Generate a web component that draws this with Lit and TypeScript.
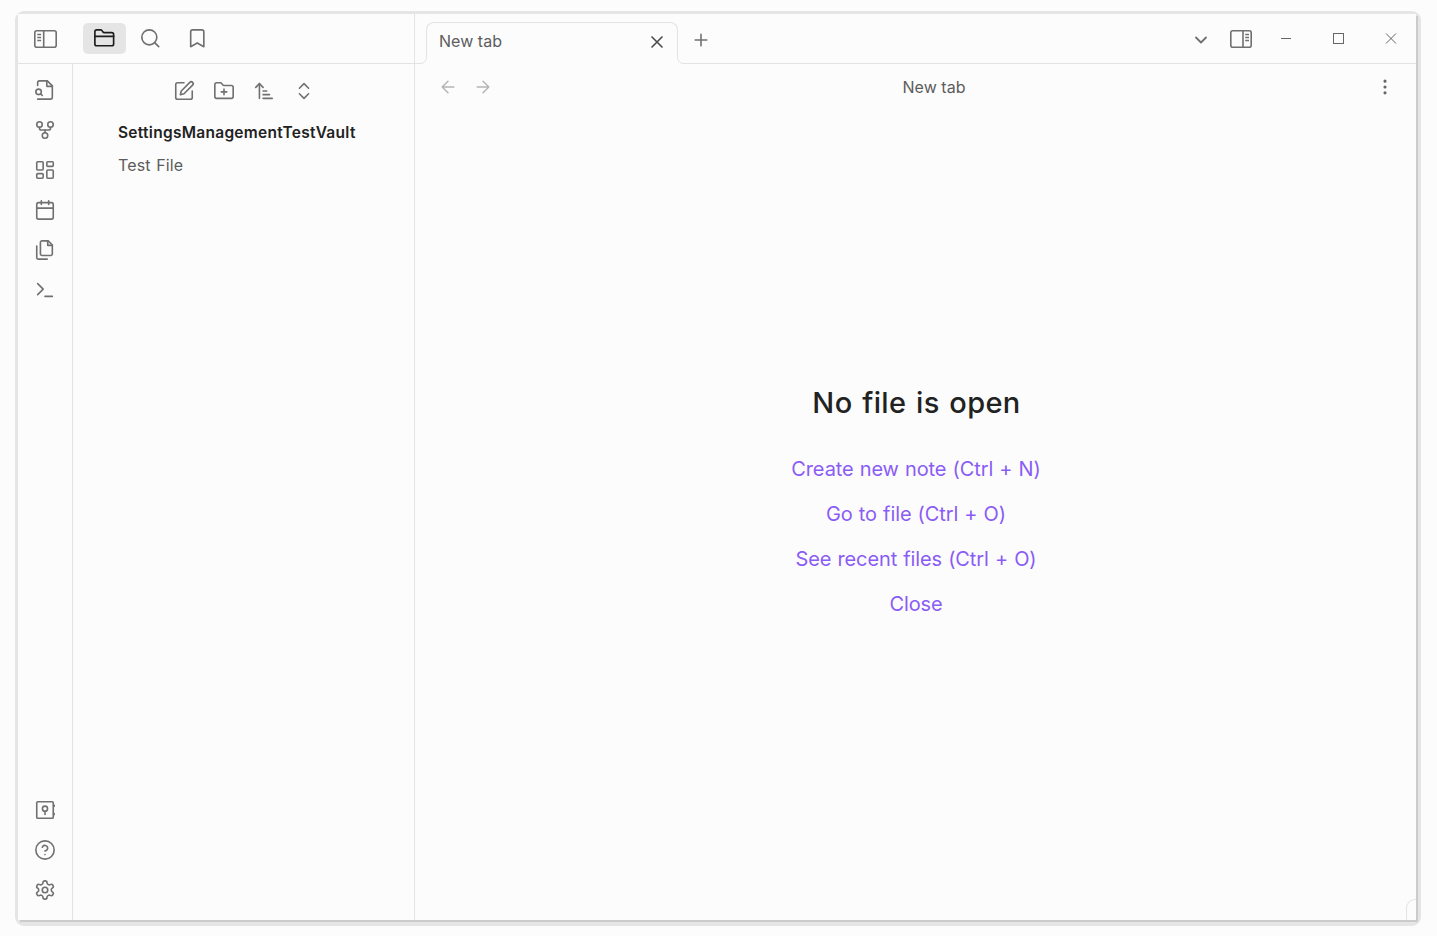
import { LitElement, html, css, svg } from "lit";
import { customElement, property } from "lit/decorators.js";

const p = (d: string) => svg`<path d=${d}></path>`;

const ICONS: Record<string, unknown> = {
  folder: svg`${p("M20 20a2 2 0 0 0 2-2V8a2 2 0 0 0-2-2h-7.9a2 2 0 0 1-1.69-.9L9.6 3.9A2 2 0 0 0 7.93 3H4a2 2 0 0 0-2 2v13a2 2 0 0 0 2 2Z")}${p("M2 10h20")}`,
  search: svg`<circle cx="11" cy="11" r="8"></circle>${p("m21 21-4.3-4.3")}`,
  bookmark: p("m19 21-7-4-7 4V5a2 2 0 0 1 2-2h10a2 2 0 0 1 2 2v16z"),
  fileSearch: svg`${p("M4 22h14a2 2 0 0 0 2-2V7.5L14.5 2H6a2 2 0 0 0-2 2v3")}${p("M14 2v6h6")}${p("M5 17a3 3 0 1 0 0-6 3 3 0 0 0 0 6z")}${p("m9 18-1.5-1.5")}`,
  fork: svg`<circle cx="12" cy="18" r="3"></circle><circle cx="6" cy="6" r="3"></circle><circle cx="18" cy="6" r="3"></circle>${p("M18 9v1a2 2 0 0 1-2 2H8a2 2 0 0 1-2-2V9")}${p("M12 12v3")}`,
  dashboard: svg`<rect x="3" y="3" width="7" height="9" rx="1"></rect><rect x="14" y="3" width="7" height="5" rx="1"></rect><rect x="14" y="12" width="7" height="9" rx="1"></rect><rect x="3" y="16" width="7" height="5" rx="1"></rect>`,
  calendar: svg`<rect x="3" y="4" width="18" height="18" rx="2"></rect>${p("M16 2v4M8 2v4M3 10h18")}`,
  files: svg`${p("M15.5 2H8.6c-.4 0-.8.2-1.1.5-.3.3-.5.7-.5 1.1v12.8c0 .4.2.8.5 1.1.3.3.7.5 1.1.5h9.8c.4 0 .8-.2 1.1-.5.3-.3.5-.7.5-1.1V6.5L15.5 2z")}${p("M3 7.6v12.8c0 .4.2.8.5 1.1.3.3.7.5 1.1.5h9.8")}${p("M15 2v5h5")}`,
  terminal: svg`${p("m4 17 6-6-6-6")}${p("M12 19h8")}`,
  vault: svg`<rect x="3" y="3" width="18" height="18" rx="1.2"></rect><circle cx="12" cy="10.6" r="2.8"></circle>${p("M12 13.6v3.2M22 6.8v1M22 16v1")}`,
  help: svg`<circle cx="12" cy="12" r="10"></circle>${p("M9.09 9a3 3 0 0 1 5.83 1c0 2-3 3-3 3")}${p("M12 17h.01")}`,
  settings: svg`${p("M12.22 2h-.44a2 2 0 0 0-2 2v.18a2 2 0 0 1-1 1.73l-.43.25a2 2 0 0 1-2 0l-.15-.08a2 2 0 0 0-2.73.73l-.22.38a2 2 0 0 0 .73 2.73l.15.1a2 2 0 0 1 1 1.72v.51a2 2 0 0 1-1 1.74l-.15.09a2 2 0 0 0-.73 2.73l.22.38a2 2 0 0 0 2.73.73l.15-.08a2 2 0 0 1 2 0l.43.25a2 2 0 0 1 1 1.73V20a2 2 0 0 0 2 2h.44a2 2 0 0 0 2-2v-.18a2 2 0 0 1 1-1.73l.43-.25a2 2 0 0 1 2 0l.15.08a2 2 0 0 0 2.73-.73l.22-.39a2 2 0 0 0-.73-2.73l-.15-.08a2 2 0 0 1-1-1.74v-.5a2 2 0 0 1 1-1.74l.15-.09a2 2 0 0 0 .73-2.73l-.22-.38a2 2 0 0 0-2.73-.73l-.15.08a2 2 0 0 1-2 0l-.43-.25a2 2 0 0 1-1-1.73V4a2 2 0 0 0-2-2z")}<circle cx="12" cy="12" r="3"></circle>`,
  edit: svg`${p("M12 3H5a2 2 0 0 0-2 2v14a2 2 0 0 0 2 2h14a2 2 0 0 0 2-2v-7")}${p("M18.375 2.625a2.12 2.12 0 0 1 3 3L12 15l-4 1 1-4Z")}`,
  folderPlus: svg`${p("M20 20a2 2 0 0 0 2-2V8a2 2 0 0 0-2-2h-7.9a2 2 0 0 1-1.69-.9L9.6 3.9A2 2 0 0 0 7.93 3H4a2 2 0 0 0-2 2v13a2 2 0 0 0 2 2Z")}${p("M12 10v6M9 13h6")}`,
  sort: svg`${p("m3 8 4-4 4 4")}${p("M7 4v16M11 12h4M11 16h7M11 20h10")}`,
  upDown: svg`${p("m7 15 5 5 5-5")}${p("m7 9 5-5 5 5")}`,
  close: p("M18 6 6 18M6 6l12 12"),
  plus: p("M5 12h14M12 5v14"),
  left: p("m12 19-7-7 7-7M19 12H5"),
  right: p("M5 12h14M12 5l7 7-7 7"),
  down: p("m6 9 6 6 6-6"),
  more: svg`<circle cx="12" cy="12" r="1"></circle><circle cx="12" cy="5" r="1"></circle><circle cx="12" cy="19" r="1"></circle>`,
};

@customElement("ui-icon")
export class UiIcon extends LitElement {
  @property() name = "";
  static styles = css`
    :host { display: block; flex: none; width: 22.5px; height: 22.5px; }
    .glyph {
      display: block; width: 100%; height: 100%; overflow: visible; fill: none;
      stroke: currentColor; stroke-width: var(--stroke, 1.75);
      stroke-linecap: round; stroke-linejoin: round;
    }
  `;
  render() {
    return html`<svg class="glyph" viewBox="0 0 24 24">${ICONS[this.name]}</svg>`;
  }
}

@customElement("app-root")
export class AppRoot extends LitElement {
  static styles = css`
    :host {
      display: block; box-sizing: border-box; width: 100%; height: 936px;
      padding: 11px 16px 10px 15px; background: #fcfcfc; color: #5c5c5c;
      font: 16px/24px Inter, "Noto Sans", sans-serif;
    }
    * { box-sizing: border-box; }
    .frame {
      height: 915px; padding: 3px 5px 6px 3px; border-radius: 9px; background: #e5e5e5;
    }
    .window {
      height: 906px; display: grid; grid-template-columns: 397px 1fr;
      background: #fcfcfc; box-shadow: 2px 2px 0 #cbcbcb; position: relative;
    }
    .side {
      border-right: 1px solid #e3e3e3; display: grid;
      grid-template-rows: 50px 1fr; min-height: 0;
    }
    .side-head {
      border-bottom: 1px solid #e3e3e3; display: flex; align-items: center;
      padding-left: 16px; color: #707070;
    }
    .panel { display: block; flex: none; fill: none; stroke: currentColor; }
    .modes { display: flex; gap: 3px; margin-left: 26px; }
    .mode {
      width: 43px; height: 31px; display: grid; place-items: center; border-radius: 5px;
    }
    .mode:last-child { margin-left: 1px; }
    .mode.active { background: #e5e5e5; color: #1c1c1c; }
    .side-body { display: grid; grid-template-columns: 55px 1fr; min-height: 0; }
    .rail {
      border-right: 1px solid #e3e3e3; display: flex; flex-direction: column;
      justify-content: space-between; padding: 6px 0 10px; color: #707070;
    }
    .rail-cell { height: 40px; display: grid; place-items: center; }
    .small { width: 22px; height: 22px; }
    .explorer { padding-top: 6px; }
    .tools { display: flex; justify-content: center; height: 41px; padding-left: 1px; color: #707070; }
    .tool { width: 40px; display: grid; place-items: center; }
    .tree { padding: 6px 0 0 45px; }
    .vault { font-weight: 600; color: #222; height: 33px; line-height: 31px; }
    .file { height: 33px; line-height: 31px; letter-spacing: 0.12px; word-spacing: 1px; }
    .vault-name { font-size: 15.5px; letter-spacing: 0.28px; }
    .main { display: grid; grid-template-rows: 50px 46px 1fr; min-width: 0; }
    .tabs {
      border-bottom: 1px solid #e3e3e3; display: flex; align-items: flex-start;
      padding: 8px 14px 0 11px; color: #707070;
    }
    .tab {
      position: relative; width: 252px; height: 42px; flex: none; display: flex;
      align-items: center; justify-content: space-between; padding: 0 10px 4px 12px;
      background: #fcfcfc; border: 1px solid #e3e3e3; border-bottom: 0;
      border-radius: 8px 8px 0 0; color: #5c5c5c;
    }
    .tab-name { margin-top: -1px; }
    .flare {
      position: absolute; bottom: 0; width: 8px; height: 8px; overflow: visible;
      fill: none; stroke: #e3e3e3;
    }
    .flare.before { left: -8px; }
    .flare.after { right: -8px; }
    .patch { fill: #fcfcfc; stroke: none; }
    .medium { width: 20px; height: 20px; }
    .close { color: #4c4c4c; --stroke: 2; }
    .add { margin: 8px 0 0 13px; --stroke: 1.9; }
    .controls { flex: 1; display: flex; justify-content: flex-end; align-items: center; height: 34px; }
    .chev { --stroke: 2.2; margin: 1px 19px 0 0; }
    .win { display: block; fill: none; stroke: #666; flex: none; margin-top: -2px; }
    .view-head {
      display: grid; grid-template-columns: 1fr auto 1fr; align-items: center;
      padding: 0 21px 0 23px;
    }
    .nav { display: flex; gap: 15px; color: #b5b5b5; }
    .more { justify-self: end; color: #666; }
    .title { margin-left: 35px; }
    .title, .tab-name { letter-spacing: 0.04px; }
    .empty { display: flex; flex-direction: column; align-items: center; padding-top: 268px; }
    .heading {
      margin: 0 0 28px; padding-left: 2px; font-size: 29px; line-height: 50px;
      font-weight: 500; color: #222; letter-spacing: 0.35px; word-spacing: 1.6px;
    }
    .action {
      font-size: 20px; line-height: 25px; height: 45px; padding: 1px 0 0 1px;
      color: #8a5cf5; letter-spacing: -0.1px; word-spacing: 0.6px;
    }
    .status {
      position: absolute; right: 0; bottom: 0; width: 10px; height: 21px;
      border: solid #e3e3e3; border-width: 1px 0 0 1px; border-radius: 9px 0 0 0;
    }
  `;

  private cell(name: string) {
    return html`<div class="rail-cell"><ui-icon class="small" name=${name}></ui-icon></div>`;
  }

  render() {
    return html`
      <div class="frame"><div class="window">
        <div class="side">
          <div class="side-head">
            <svg class="panel" width="23" height="18" stroke-width="1.6" viewBox="0 0 23 18">
              <rect x=".8" y=".8" width="21.4" height="16.4" rx="2"></rect>
              <path d="M9.7 1v16M3.3 4.5h3.8M3.3 7.5h3.8M3.3 10.5h3.8"></path>
            </svg>
            <div class="modes">
              <div class="mode active"><ui-icon name="folder"></ui-icon></div>
              <div class="mode"><ui-icon name="search"></ui-icon></div>
              <div class="mode"><ui-icon name="bookmark"></ui-icon></div>
            </div>
          </div>
          <div class="side-body">
            <div class="rail">
              <div>${["fileSearch", "fork", "dashboard", "calendar", "files", "terminal"].map((n) => this.cell(n))}</div>
              <div>${["vault", "help", "settings"].map((n) => this.cell(n))}</div>
            </div>
            <div class="explorer">
              <div class="tools">
                ${["edit", "folderPlus", "sort", "upDown"].map((n) => html`<div class="tool"><ui-icon class="small" name=${n}></ui-icon></div>`)}
              </div>
              <div class="tree">
                <div class="vault"><span class="vault-name">SettingsManagementTestVault</span></div>
                <div class="file">Test File</div>
              </div>
            </div>
          </div>
        </div>
        <div class="main">
          <div class="tabs">
            <div class="tab">
              <svg class="flare before" viewBox="0 0 8 8">
                <path class="patch" d="M1 8V7.5C5 7.5 7 5 7 0H9V8Z"></path>
                <path d="M0 7.5H1C5 7.5 7.5 5 7.5 0"></path>
              </svg>
              <span class="tab-name">New tab</span>
              <ui-icon class="close medium" name="close"></ui-icon>
              <svg class="flare after" viewBox="0 0 8 8">
                <path class="patch" d="M7 8V7.5C3 7.5 1 5 1 0H-1V8Z"></path>
                <path d="M8 7.5H7C3 7.5 .5 5 .5 0"></path>
              </svg>
            </div>
            <ui-icon class="add medium" name="plus"></ui-icon>
            <div class="controls">
              <ui-icon class="chev medium" name="down"></ui-icon>
              <svg class="panel" width="22" height="18" stroke-width="1.6" viewBox="0 0 22 18">
                <rect x=".8" y=".8" width="20.4" height="16.4" rx="2"></rect>
                <path d="M13 1v16M15.2 4.5h3.8M15.2 7.5h3.8M15.2 10.5h3.8"></path>
              </svg>
              <svg class="win" width="150" height="12" viewBox="0 0 150 12">
                <path d="M29 6.5h10"></path>
                <rect x="81.5" y="1.5" width="10" height="10"></rect>
                <path d="m134 1.5 10 10M144 1.5l-10 10"></path>
              </svg>
            </div>
          </div>
          <div class="view-head">
            <div class="nav">
              <ui-icon class="medium" name="left"></ui-icon>
              <ui-icon class="medium" name="right"></ui-icon>
            </div>
            <span class="title">New tab</span>
            <ui-icon class="more medium" name="more"></ui-icon>
          </div>
          <div class="empty">
            <h1 class="heading">No file is open</h1>
            ${["Create new note (Ctrl + N)", "Go to file (Ctrl + O)", "See recent files (Ctrl + O)", "Close"].map((t) => html`<div class="action">${t}</div>`)}
          </div>
        </div>
        <div class="status"></div>
      </div></div>
    `;
  }
}
